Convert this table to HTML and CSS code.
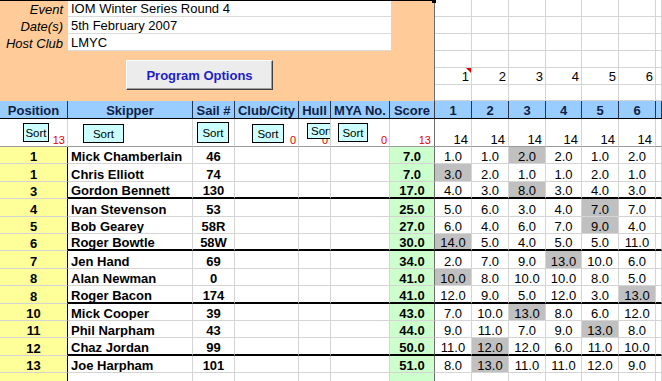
FILE: index.html
```html
<!DOCTYPE html>
<html>
<head>
<meta charset="utf-8">
<title>IOM Winter Series Round 4</title>
<link rel="stylesheet" href="styles.css">
</head>
<body>
<div class="sheet">
  <div class="top">
    <div class="info">
      <span class="corner"></span>
      <div class="fields">
        <div class="lbl">Event</div><div class="val">IOM Winter Series Round 4</div>
        <div class="lbl">Date(s)</div><div class="val">5th February 2007</div>
        <div class="lbl">Host Club</div><div class="val">LMYC</div>
      </div>
      <div class="progbtn">Program Options</div>
    </div>
    <div class="topgrid">
      <i></i><i></i><i></i><i></i><i></i><i></i><i></i>
      <i></i><i></i><i></i><i></i><i></i><i></i><i></i>
      <i></i><i></i><i></i><i></i><i></i><i></i><i></i>
      <i></i><i></i><i></i><i></i><i></i><i></i><i></i>
      <i class="num">1<span class="tri"></span></i><i class="num">2</i><i class="num">3</i><i class="num">4</i><i class="num">5</i><i class="num">6</i><i></i>
      <i></i><i></i><i></i><i></i><i></i><i></i><i></i>
    </div>
  </div>

  <div class="row hdr">
    <div class="c h">Position</div><div class="c h">Skipper</div><div class="c h">Sail #</div><div class="c h">Club/City</div><div class="c h">Hull</div><div class="c h">MYA No.</div><div class="c h hscore">Score</div><div class="c h">1</div><div class="c h">2</div><div class="c h">3</div><div class="c h">4</div><div class="c h">5</div><div class="c h">6</div><div class="c h"></div>
  </div>

  <div class="row srt">
    <div class="c s"><span class="sortbtn sb-pos">Sort</span><span class="cnt">13</span></div>
    <div class="c s"><span class="sortbtn sb-skip">Sort</span></div>
    <div class="c s"><span class="sortbtn sb-sail">Sort</span></div>
    <div class="c s"><span class="sortbtn sb-club">Sort</span><span class="cnt">0</span></div>
    <div class="c s"><span class="cnt">0</span><span class="sortbtn sb-hull">Sort</span></div>
    <div class="c s"><span class="sortbtn sb-mya">Sort</span><span class="cnt">0</span></div>
    <div class="c s sscore"><span class="cnt">13</span></div>
    <div class="c s rs">14</div><div class="c s rs">14</div><div class="c s rs">14</div><div class="c s rs">14</div><div class="c s rs">14</div><div class="c s rs">14</div><div class="c s"></div>
  </div>

  <div class="row"><div class="c pos">1</div><div class="c name">Mick Chamberlain</div><div class="c sail">46</div><div class="c"></div><div class="c"></div><div class="c"></div><div class="c score">7.0</div><div class="c r">1.0</div><div class="c r">1.0</div><div class="c r d">2.0</div><div class="c r">2.0</div><div class="c r">1.0</div><div class="c r">2.0</div><div class="c"></div></div>
  <div class="row"><div class="c pos">1</div><div class="c name">Chris Elliott</div><div class="c sail">74</div><div class="c"></div><div class="c"></div><div class="c"></div><div class="c score">7.0</div><div class="c r d">3.0</div><div class="c r">2.0</div><div class="c r">1.0</div><div class="c r">1.0</div><div class="c r">2.0</div><div class="c r">1.0</div><div class="c"></div></div>
  <div class="row grp"><div class="c pos">3</div><div class="c name">Gordon Bennett</div><div class="c sail">130</div><div class="c"></div><div class="c"></div><div class="c"></div><div class="c score">17.0</div><div class="c r">4.0</div><div class="c r">3.0</div><div class="c r d">8.0</div><div class="c r">3.0</div><div class="c r">4.0</div><div class="c r">3.0</div><div class="c"></div></div>
  <div class="row"><div class="c pos">4</div><div class="c name">Ivan Stevenson</div><div class="c sail">53</div><div class="c"></div><div class="c"></div><div class="c"></div><div class="c score">25.0</div><div class="c r">5.0</div><div class="c r">6.0</div><div class="c r">3.0</div><div class="c r">4.0</div><div class="c r d">7.0</div><div class="c r">7.0</div><div class="c"></div></div>
  <div class="row"><div class="c pos">5</div><div class="c name">Bob Gearey</div><div class="c sail">58R</div><div class="c"></div><div class="c"></div><div class="c"></div><div class="c score">27.0</div><div class="c r">6.0</div><div class="c r">4.0</div><div class="c r">6.0</div><div class="c r">7.0</div><div class="c r d">9.0</div><div class="c r">4.0</div><div class="c"></div></div>
  <div class="row grp"><div class="c pos">6</div><div class="c name">Roger Bowtle</div><div class="c sail">58W</div><div class="c"></div><div class="c"></div><div class="c"></div><div class="c score">30.0</div><div class="c r d">14.0</div><div class="c r">5.0</div><div class="c r">4.0</div><div class="c r">5.0</div><div class="c r">5.0</div><div class="c r">11.0</div><div class="c"></div></div>
  <div class="row"><div class="c pos">7</div><div class="c name">Jen Hand</div><div class="c sail">69</div><div class="c"></div><div class="c"></div><div class="c"></div><div class="c score">34.0</div><div class="c r">2.0</div><div class="c r">7.0</div><div class="c r">9.0</div><div class="c r d">13.0</div><div class="c r">10.0</div><div class="c r">6.0</div><div class="c"></div></div>
  <div class="row"><div class="c pos">8</div><div class="c name">Alan Newman</div><div class="c sail">0</div><div class="c"></div><div class="c"></div><div class="c"></div><div class="c score">41.0</div><div class="c r d">10.0</div><div class="c r">8.0</div><div class="c r">10.0</div><div class="c r">10.0</div><div class="c r">8.0</div><div class="c r">5.0</div><div class="c"></div></div>
  <div class="row grp"><div class="c pos">8</div><div class="c name">Roger Bacon</div><div class="c sail">174</div><div class="c"></div><div class="c"></div><div class="c"></div><div class="c score">41.0</div><div class="c r">12.0</div><div class="c r">9.0</div><div class="c r">5.0</div><div class="c r">12.0</div><div class="c r">3.0</div><div class="c r d">13.0</div><div class="c"></div></div>
  <div class="row"><div class="c pos">10</div><div class="c name">Mick Cooper</div><div class="c sail">39</div><div class="c"></div><div class="c"></div><div class="c"></div><div class="c score">43.0</div><div class="c r">7.0</div><div class="c r">10.0</div><div class="c r d">13.0</div><div class="c r">8.0</div><div class="c r">6.0</div><div class="c r">12.0</div><div class="c"></div></div>
  <div class="row"><div class="c pos">11</div><div class="c name">Phil Narpham</div><div class="c sail">43</div><div class="c"></div><div class="c"></div><div class="c"></div><div class="c score">44.0</div><div class="c r">9.0</div><div class="c r">11.0</div><div class="c r">7.0</div><div class="c r">9.0</div><div class="c r d">13.0</div><div class="c r">8.0</div><div class="c"></div></div>
  <div class="row grp"><div class="c pos">12</div><div class="c name">Chaz Jordan</div><div class="c sail">99</div><div class="c"></div><div class="c"></div><div class="c"></div><div class="c score">50.0</div><div class="c r">11.0</div><div class="c r d">12.0</div><div class="c r">12.0</div><div class="c r">6.0</div><div class="c r">11.0</div><div class="c r">10.0</div><div class="c"></div></div>
  <div class="row"><div class="c pos">13</div><div class="c name">Joe Harpham</div><div class="c sail">101</div><div class="c"></div><div class="c"></div><div class="c"></div><div class="c score">51.0</div><div class="c r">8.0</div><div class="c r d">13.0</div><div class="c r">11.0</div><div class="c r">11.0</div><div class="c r">12.0</div><div class="c r">9.0</div><div class="c"></div></div>
  <div class="row"><div class="c pos"></div><div class="c name"></div><div class="c sail"></div><div class="c"></div><div class="c"></div><div class="c"></div><div class="c score"></div><div class="c r"></div><div class="c r"></div><div class="c r"></div><div class="c r"></div><div class="c r"></div><div class="c r"></div><div class="c"></div></div>
</div>
</body>
</html>
```

FILE: styles.css
```css
html, body {
  margin: 0;
  padding: 0;
  background: #ffffff;
  overflow: hidden;
}

body {
  font-family: "Liberation Sans", Arial, sans-serif;
  font-size: 13px;
  color: #000;
}

.sheet {
  width: 662px;
  height: 381px;
  overflow: hidden;
  --cols: 68px 125px 42px 64px 32px 59px 45px 37px 37px 37px 36px 37px 37px 1fr;
}

/* ---------- top area ---------- */
.top {
  display: flex;
  height: 101px;
}

.info {
  position: relative;
  width: 435px;
  flex: none;
  box-sizing: border-box;
  background: #ffcc99;
  border-top: 1px solid #000;
  border-right: 1px solid #6e6e6e;
}

.corner {
  position: absolute;
  top: -1px;
  right: -2px;
  width: 4px;
  height: 3px;
  background: #000;
}

.fields {
  display: grid;
  grid-template-columns: 68px 323px;
  grid-template-rows: 16px 17px 17px;
}

.lbl, .val {
  display: flex;
  align-items: flex-end;
  line-height: 13px;
  padding-bottom: 1px;
  box-sizing: border-box;
  white-space: nowrap;
}

.lbl {
  justify-content: flex-end;
  font-style: italic;
  padding-right: 5px;
}

.val {
  background: #fff;
  border-bottom: 1px solid #dadada;
  padding-left: 3px;
}

.progbtn {
  margin: 9px 0 0 126px;
  width: 147px;
  height: 30px;
  box-sizing: border-box;
  display: flex;
  align-items: center;
  justify-content: center;
  background: #ececec;
  border: 1px solid;
  border-color: #ffffff #404040 #404040 #ffffff;
  box-shadow: inset -1px -1px 0 #a0a0a0;
  color: #1e1ec8;
  font-weight: bold;
  font-size: 13px;
}

.topgrid {
  flex: 1;
  display: grid;
  grid-template-columns: 37px 37px 37px 36px 37px 37px 1fr;
  grid-template-rows: 17px 17px 17px 17px 17px 16px;
}

.topgrid > i {
  font-style: normal;
  box-sizing: border-box;
  border-right: 1px solid #d4d4d4;
  border-bottom: 1px solid #d4d4d4;
}

.topgrid > .num {
  position: relative;
  display: flex;
  align-items: flex-end;
  justify-content: flex-end;
  line-height: 13px;
  padding: 0 2px 1px 0;
}

.tri {
  position: absolute;
  top: 0;
  right: 0;
  width: 0;
  height: 0;
  border-top: 5px solid #e00000;
  border-left: 5px solid transparent;
}

/* ---------- grid rows ---------- */
.row {
  display: grid;
  grid-template-columns: var(--cols);
  height: 17.4px;
}

.c {
  box-sizing: border-box;
  display: flex;
  align-items: flex-end;
  line-height: 13px;
  white-space: nowrap;
  overflow: hidden;
  border-right: 1px solid #d4d4d4;
  border-bottom: 1px solid #d4d4d4;
}

/* header */
.hdr {
  height: 18px;
}

.h {
  background: #99ccff;
  color: #0f1f45;
  font-weight: bold;
  justify-content: center;
  padding-bottom: 1px;
  border-right-color: #27344f;
  border-bottom-color: #000;
}

.hscore {
  border-right-color: #404040;
}

/* sort row */
.srt {
  height: 28px;
}

.s {
  position: relative;
  justify-content: flex-end;
  padding-right: 2px;
  border-bottom-color: #9a9a9a;
}

.sscore {
  border-right-color: #6e6e6e;
  padding-right: 3px;
}

.rs {
  padding-right: 3px;
}

.cnt {
  color: #e00000;
  font-size: 11px;
  line-height: 11px;
}

.sortbtn {
  position: absolute;
  box-sizing: border-box;
  display: flex;
  align-items: center;
  justify-content: center;
  background: #ccffff;
  border: 1px solid #000;
  font-size: 11.5px;
  line-height: 12px;
  color: #000;
}

.sb-pos  { left: 23px; top: 4px; width: 26px; height: 19px; }
.sb-skip { left: 15px; top: 5px; width: 41px; height: 19px; }
.sb-sail { left: 4px;  top: 3px; width: 32px; height: 21px; }
.sb-club { left: 17px; top: 5px; width: 32px; height: 19px; }
.sb-hull { left: 8px;  top: 4px; width: 30px; height: 16px; justify-content: flex-start; padding-left: 3px; }
.sb-mya  { left: 7px;  top: 4px; width: 30px; height: 19px; }

/* data cells */
.pos {
  background: #ffff99;
  font-weight: bold;
  justify-content: center;
  border-right-color: #000;
}

.name {
  font-weight: bold;
  padding-left: 3px;
}

.sail {
  font-weight: bold;
  justify-content: center;
}

.score {
  background: #ccffcc;
  font-weight: bold;
  justify-content: center;
  border-right-color: #6e6e6e;
}

.r {
  justify-content: center;
}

.d {
  background: #c0c0c0;
}

.grp .c:not(.pos) {
  border-bottom: 2px solid #000;
}
```
